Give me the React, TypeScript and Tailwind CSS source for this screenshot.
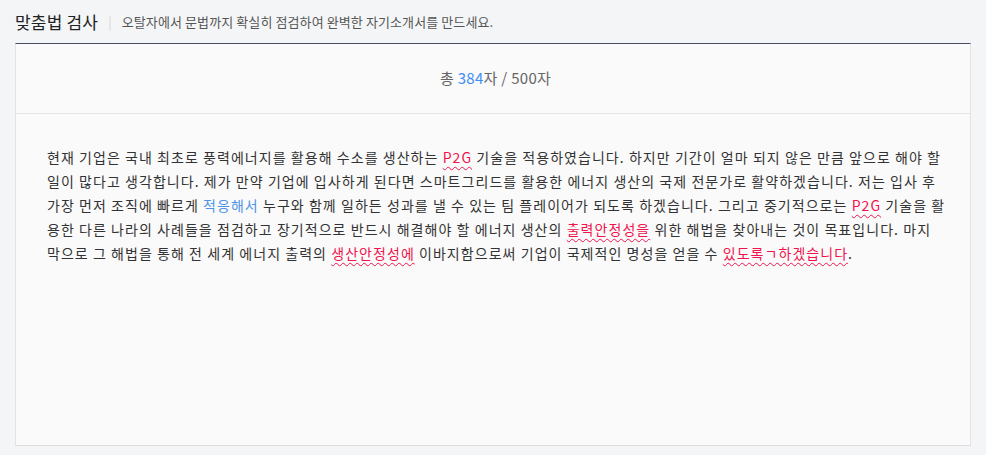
import React from "react";

const font = { fontFamily: '"Noto Sans CJK KR", "Noto Sans", sans-serif' };

function Err({ children }: { children: React.ReactNode }) {
  return (
    <span className="text-[#f0134d] underline decoration-wavy decoration-[#f0134d] decoration-1 underline-offset-[3px]">
      {children}
    </span>
  );
}

export default function App() {
  return (
    <div className="w-[986px] h-[455px] bg-[#f4f5f7] overflow-hidden" style={font}>
      <div className="h-[43px] flex items-center pl-[15px]">
        <span className="text-[17px] text-[#222] tracking-[0.2px]">맞춤법 검사</span>
        <span className="ml-[10px] mr-[10px] text-[13px] text-[#d5d5d5]">|</span>
        <span className="text-[13px] text-[#555] tracking-[0.1px]">오탈자에서 문법까지 확실히 점검하여 완벽한 자기소개서를 만드세요.</span>
      </div>
      <div className="mx-[15px] h-[403px] bg-[#fafafa] border-t border-t-[#4b5066] border-x border-b border-x-[#e2e2e2] border-b-[#dcdcdc] flex flex-col">
        <div className="h-[70px] flex items-center justify-center border-b border-[#e6e6e6] text-[15px] text-[#666] tracking-[0.3px]">
          <span className="ml-[5px]">
            총 <span className="text-[#3d8ef5]">384</span>자 / 500자
          </span>
        </div>
        <div className="pt-[31px] pl-[31px] pr-[10px] text-[14px] leading-[24px] text-[#333] tracking-[1.05px] whitespace-nowrap">
          <div>
            현재 기업은 국내 최초로 풍력에너지를 활용해 수소를 생산하는 <Err>P2G</Err> 기술을 적용하였습니다. 하지만 기간이 얼마 되지 않은 만큼 앞으로 해야 할
          </div>
          <div>
            일이 많다고 생각합니다. 제가 만약 기업에 입사하게 된다면 스마트그리드를 활용한 에너지 생산의 국제 전문가로 활약하겠습니다. 저는 입사 후
          </div>
          <div>
            가장 먼저 조직에 빠르게 <span className="text-[#4d94e8]">적응해서</span> 누구와 함께 일하든 성과를 낼 수 있는 팀 플레이어가 되도록 하겠습니다. 그리고 중기적으로는 <Err>P2G</Err> 기술을 활
          </div>
          <div>
            용한 다른 나라의 사례들을 점검하고 장기적으로 반드시 해결해야 할 에너지 생산의 <Err>출력안정성을</Err> 위한 해법을 찾아내는 것이 목표입니다. 마지
          </div>
          <div>
            막으로 그 해법을 통해 전 세계 에너지 출력의 <Err>생산안정성에</Err> 이바지함으로써 기업이 국제적인 명성을 얻을 수 <Err>있도록ㄱ하겠습니다</Err>.
          </div>
        </div>
      </div>
    </div>
  );
}
